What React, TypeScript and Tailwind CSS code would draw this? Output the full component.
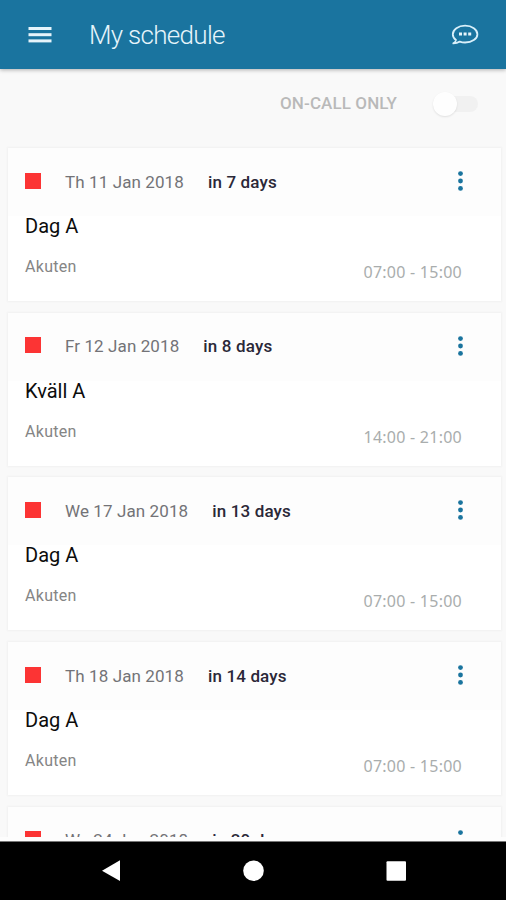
import { useState } from "react";

type Shift = {
  date: string;
  due: string;
  title: string;
  unit: string;
  time: string;
};

const shifts: Shift[] = [
  { date: "Th 11 Jan 2018", due: "in 7 days", title: "Dag A", unit: "Akuten", time: "07:00 - 15:00" },
  { date: "Fr 12 Jan 2018", due: "in 8 days", title: "Kväll A", unit: "Akuten", time: "14:00 - 21:00" },
  { date: "We 17 Jan 2018", due: "in 13 days", title: "Dag A", unit: "Akuten", time: "07:00 - 15:00" },
  { date: "Th 18 Jan 2018", due: "in 14 days", title: "Dag A", unit: "Akuten", time: "07:00 - 15:00" },
  { date: "We 24 Jan 2018", due: "in 20 days", title: "Dag A", unit: "Akuten", time: "07:00 - 15:00" },
];

const MenuIcon = () => (
  <svg width="24" height="18" viewBox="0 0 24 18" fill="#e6f4fb">
    <rect x="0.5" y="1" width="23" height="3" />
    <rect x="0.5" y="7.2" width="23" height="3" />
    <rect x="0.5" y="13.4" width="23" height="3" />
  </svg>
);

const ChatIcon = () => (
  <svg width="28" height="22" viewBox="0 0 28 22" fill="none">
    <path
      d="M5 16C2.9 14.5 1.8 12.6 1.8 10.2C1.8 5.5 7.2 1.7 14.1 1.7S26.4 5.5 26.4 10.2S21 18.5 14.1 18.5C12.2 18.5 10.4 18.2 8.8 17.6C7.2 18.7 5 19.4 2.3 19.4C3.9 18.6 4.8 17.5 5 16Z"
      stroke="#d9f0fa"
      strokeWidth="1.8"
      strokeLinejoin="round"
    />
    <path d="M8 8.5h3v3h-3zM12.6 8.5h3v3h-3zM17.2 8.5h3v3h-3z" fill="#e6f4fb" />
  </svg>
);

const MoreIcon = () => (
  <svg width="6" height="20" viewBox="0 0 6 20" fill="#1a749e">
    <circle cx="3.5" cy="2.6" r="2.4" />
    <circle cx="3.5" cy="10" r="2.4" />
    <circle cx="3.5" cy="17.4" r="2.4" />
  </svg>
);

const ShiftCard = ({ shift }: { shift: Shift }) => (
  <li className="h-[153px] shrink-0 bg-white shadow-[0_0_2px_1px_rgba(0,0,0,0.035)]">
    <div className="flex h-[68px] items-center bg-[#fdfdfd] pr-[38px] pl-[17px]">
      <span className="mb-[3px] size-4 bg-[#fc3434]" />
      <span className="mb-px ml-6 text-[17px] leading-6 tracking-[0.1px] text-[#737377]">{shift.date}</span>
      <span className="mb-px ml-6 text-[17px] leading-6 font-medium tracking-[0.15px] text-[#2b2838]">{shift.due}</span>
      <button aria-label="more" className="mb-[2px] ml-auto">
        <MoreIcon />
      </button>
    </div>
    <div className="flex justify-between pr-[39px] pl-[17px]">
      <div>
        <h2 className="mt-[-2px] text-[20px] leading-6 text-[#0c0c0c]">{shift.title}</h2>
        <p className="mt-[17px] text-[16px] leading-6 tracking-[0.3px] text-[#858585]">{shift.unit}</p>
      </div>
      <p className="mt-11 font-['Noto_Sans',sans-serif] text-[16px] leading-6 tracking-[0.25px] text-[#a9adad]">
        {shift.time}
      </p>
    </div>
  </li>
);

export default function App() {
  const [onCall, setOnCall] = useState(false);

  return (
    <div className="flex h-[900px] w-[506px] flex-col overflow-hidden bg-[#f9f9f9] font-['Roboto',sans-serif]">
      <header className="z-10 flex h-[69px] shrink-0 items-center bg-[#1a749f] pr-[27px] pl-7 shadow-[0_1px_4px_rgba(0,0,0,0.3)]">
        <button aria-label="menu">
          <MenuIcon />
        </button>
        <h1 className="ml-[37px] text-[26px] leading-8 font-light tracking-[-0.7px] text-[#e6f4fb]">My schedule</h1>
        <button aria-label="messages" className="ml-auto">
          <ChatIcon />
        </button>
      </header>

      <main className="h-[768px] shrink-0 overflow-hidden">
        <div className="flex h-[79px] items-center justify-end pr-7 pb-[9px]">
          <span className="text-[17px] font-medium tracking-[0.1px] text-[#b9b9b9]">ON-CALL ONLY</span>
          <button
            role="switch"
            aria-checked={onCall}
            aria-label="on-call only"
            onClick={() => setOnCall(!onCall)}
            className="ml-9 flex h-6 w-[45px] items-center"
          >
            <span className="flex h-4 w-full items-center rounded-full bg-[#f1f1f1]">
              <span
                className={`size-6 rounded-full bg-[#fefefe] shadow-[0_1px_2px_rgba(0,0,0,0.1)] ${onCall ? "ml-auto" : ""}`}
              />
            </span>
          </button>
        </div>
        <ul className="flex flex-col gap-[11.7px] pr-[5px] pl-2">
          {shifts.map((shift) => (
            <ShiftCard key={shift.date} shift={shift} />
          ))}
        </ul>
      </main>

      <div className="h-1 shrink-0 bg-[#fdfdfd]" />
      <nav className="flex grow items-center justify-center border-t border-[#777] bg-black">
        <svg width="300" height="24" viewBox="0 0 300 24" fill="#fff" overflow="visible">
          <path d="M17 1.3V22L-1 11.7Z" />
          <circle cx="150.5" cy="11.7" r="10.3" />
          <rect x="283.5" y="2.2" width="19.5" height="19.5" rx="1" />
        </svg>
      </nav>
    </div>
  );
}
